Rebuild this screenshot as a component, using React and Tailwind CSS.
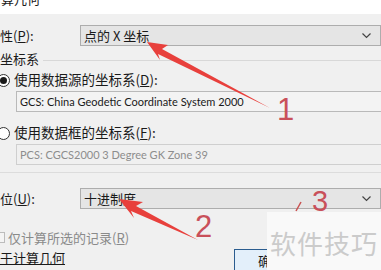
import React from 'react';

const cjk = '"Noto Sans CJK SC", "Noto Sans", sans-serif';
const latin = 'Lato, "Noto Sans CJK SC", sans-serif';

const Combo = ({ value }) => (
  <div className="ml-[80px] w-[312px] h-[21px] flex items-center justify-between border border-[#adadad] bg-[#e5e5e5] pl-[3px] pr-[8px]">
    <span className="text-[13px] leading-none text-[#1a1a1a]">{value}</span>
    <svg width="9" height="6" viewBox="0 0 9 6" className="mr-[1px]">
      <path d="M0.5 0.5 L4.5 4.5 L8.5 0.5" fill="none" stroke="#444" strokeWidth="1.2" />
    </svg>
  </div>
);

const Radio = ({ checked }) => (
  <div className="w-[13px] h-[13px] rounded-full border border-[#333] bg-white flex items-center justify-center shrink-0">
    {checked && <div className="w-[7px] h-[7px] rounded-full bg-[#1a1a1a]" />}
  </div>
);

const App = () => {
  return (
    <div
      className="relative w-[381px] h-[270px] overflow-hidden bg-[#f0f0f0] text-[#1a1a1a]"
      style={{ fontFamily: cjk }}
    >
      {/* title bar */}
      <div className="h-[14px] bg-white overflow-hidden">
        <div className="-mt-[9px] -ml-[12px] text-[13px] leading-[15px]">计算几何</div>
      </div>

      {/* 属性 */}
      <div className="relative mt-[11px] h-[21px] flex items-center">
        <span className="absolute -left-[13px] text-[13px] leading-none">属性(<u>P</u>):</span>
        <Combo value="点的 X 坐标" />
      </div>

      {/* 坐标系 group */}
      <div className="mt-[4px] h-[17px] flex items-center">
        <span className="text-[13px] leading-none shrink-0">坐标系</span>
        <div className="ml-[4px] flex-1 h-px bg-[#d8d8d8] mt-[3px]" />
      </div>

      <div className="mt-[6px] h-[14px] flex items-center -ml-[3px]">
        <Radio checked />
        <span className="ml-[4px] text-[13.5px] leading-none">使用数据源的坐标系(<u>D</u>):</span>
      </div>
      <div className="mt-[4px] ml-[16px] w-[380px] h-[21px] border border-[#b9b9b9] bg-[#f3f3f3] flex items-center pl-[3px]">
        <span className="text-[11px] leading-none" style={{ fontFamily: latin }}>
          GCS: China Geodetic Coordinate System 2000
        </span>
      </div>

      <div className="mt-[14px] h-[14px] flex items-center -ml-[3px]">
        <Radio />
        <span className="ml-[4px] text-[13.5px] leading-none">使用数据框的坐标系(<u>F</u>):</span>
      </div>
      <div className="mt-[4px] ml-[16px] w-[380px] h-[21px] border border-[#cfcfcf] bg-[#f0f0f0] flex items-center pl-[3px]">
        <span className="text-[11px] leading-none text-[#8d8d8d]" style={{ fontFamily: latin }}>
          PCS: CGCS2000 3 Degree GK Zone 39
        </span>
      </div>
      <div className="mt-[7px] h-px bg-[#dcdcdc]" />

      {/* 单位 */}
      <div className="relative mt-[15px] h-[21px] flex items-center">
        <span className="absolute -left-[13px] text-[13px] leading-none">单位(<u>U</u>):</span>
        <Combo value="十进制度" />
      </div>

      {/* checkbox */}
      <div className="mt-[21px] h-[14px] flex items-center -ml-[6px]">
        <div className="w-[11px] h-[11px] border border-[#bcbcbc] bg-[#f4f4f4]" />
        <span className="ml-[3px] text-[13px] leading-none text-[#8a8a8a]">仅计算所选的记录(<u>R</u>)</span>
      </div>

      {/* bottom row */}
      <div className="mt-[6px] flex items-start">
        <span className="-ml-[13px] w-[247px] shrink-0 text-[13px] leading-[16px]">
          <span className="underline">关于计算几何</span>
        </span>
        <div className="mt-[-1px] w-[80px] h-[22px] border border-[#2a5c8f] bg-[#e3effa] pl-[23px] pt-[3px] text-[13px] leading-[16px]">
          确定
        </div>
      </div>

      {/* watermark */}
      <div className="absolute left-[267px] top-[212px] w-[120px] h-[60px] bg-[#f9f9f9] flex items-start pt-[18px] pl-[3px]">
        <span className="text-[26px] leading-none tracking-[1px] text-[#cbcbcb]">软件技巧</span>
      </div>

      {/* red annotations */}
      <svg className="absolute inset-0 pointer-events-none" width="381" height="270" viewBox="0 0 381 270">
        <polygon points="147,42 168,45 162,49 270,108 158,54 160,60" fill="#e8403c" />
        <polygon points="119,199 143,202 136,206 198,240 131,211 134,218" fill="#e8403c" />
        <line x1="296" y1="211" x2="301" y2="202" stroke="#c9504f" strokeWidth="1.5" />
      </svg>
      <span className="absolute left-[277px] top-[94px] text-[31px] leading-none text-[#c9505a]" style={{ fontFamily: '"Liberation Sans", sans-serif' }}>1</span>
      <span className="absolute left-[195px] top-[211px] text-[31px] leading-none text-[#c9505a]" style={{ fontFamily: '"Liberation Sans", sans-serif' }}>2</span>
      <span className="absolute left-[312px] top-[187px] text-[29px] leading-none text-[#c9505a]" style={{ fontFamily: '"Liberation Sans", sans-serif' }}>3</span>
    </div>
  );
};

export default App;
